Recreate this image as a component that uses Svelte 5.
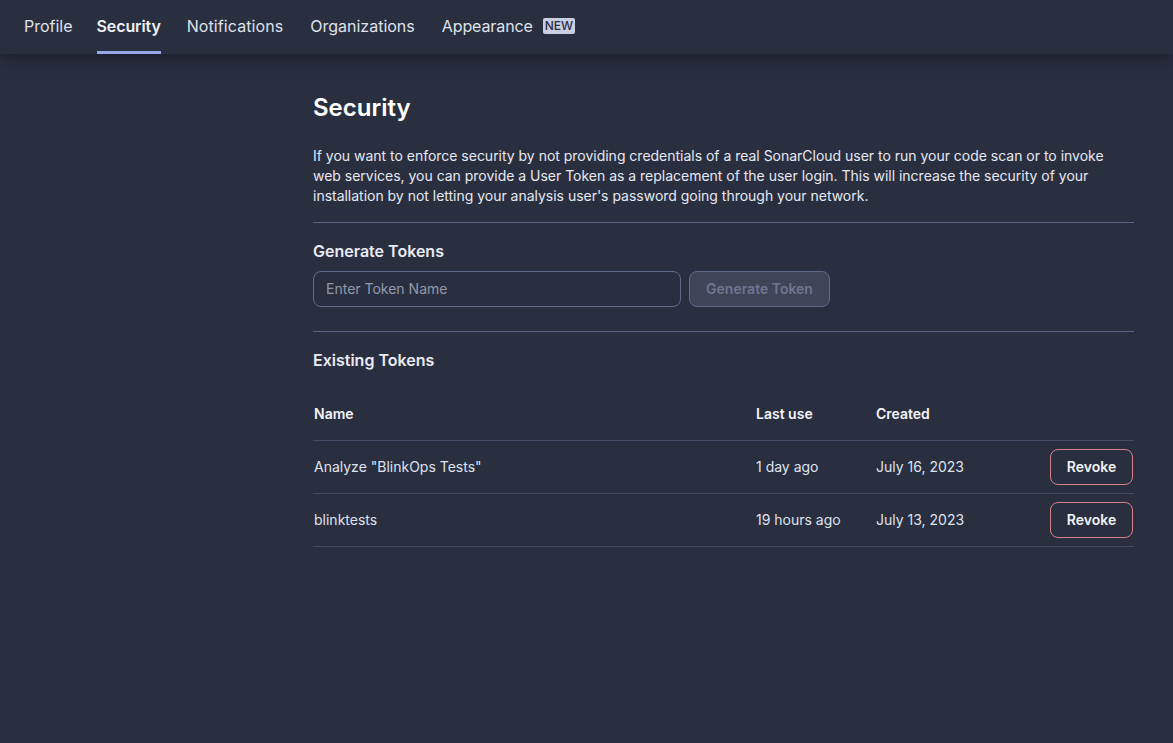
<script>
  const tabs = [
    { label: 'Profile' },
    { label: 'Security', active: true },
    { label: 'Notifications' },
    { label: 'Organizations' },
    { label: 'Appearance', badge: 'NEW' }
  ];

  const tokens = [
    { name: 'Analyze "BlinkOps Tests"', lastUse: '1 day ago', created: 'July 16, 2023' },
    { name: 'blinktests', lastUse: '19 hours ago', created: 'July 13, 2023' }
  ];
</script>

<nav class="topbar">
  {#each tabs as tab}
    <a class="tab" class:active={tab.active} href="#top">
      {tab.label}
      {#if tab.badge}<span class="badge">{tab.badge}</span>{/if}
    </a>
  {/each}
</nav>

<main class="content">
  <h1>Security</h1>
  <p class="intro">
    If you want to enforce security by not providing credentials of a real SonarCloud user to run your code scan or to invoke web services, you can provide a User Token as a replacement of the user login. This will increase the security of your installation by not letting your analysis user's password going through your network.
  </p>

  <section class="generate">
    <h2>Generate Tokens</h2>
    <form class="token-form">
      <input type="text" placeholder="Enter Token Name" />
      <button type="button" class="generate-btn" disabled>Generate Token</button>
    </form>
  </section>

  <section class="existing">
    <h2>Existing Tokens</h2>
    <table>
      <thead>
        <tr>
          <th class="col-name">Name</th>
          <th class="col-use">Last use</th>
          <th class="col-created">Created</th>
          <th></th>
        </tr>
      </thead>
      <tbody>
        {#each tokens as token}
          <tr>
            <td>{token.name}</td>
            <td>{token.lastUse}</td>
            <td>{token.created}</td>
            <td class="actions"><button type="button" class="revoke">Revoke</button></td>
          </tr>
        {/each}
      </tbody>
    </table>
  </section>
</main>

<style>
  :global(body) {
    background: #2a2f40;
    color: #e9ebf4;
    font-family: Inter, "Noto Sans", sans-serif;
    min-height: 743px;
    overflow: hidden;
  }

  .topbar {
    display: flex;
    height: 54px;
    box-sizing: border-box;
    padding-left: 24px;
    gap: 26px;
    background: #2a2f40;
    box-shadow: 0 4px 14px rgba(18, 20, 30, 0.65);
  }

  .tab {
    display: flex;
    align-items: center;
    gap: 9px;
    height: 54px;
    box-sizing: border-box;
    padding-top: 1px;
    color: #dfe2ea;
    font-size: 16px;
    line-height: 24px;
    text-decoration: none;
    border-bottom: 3px solid transparent;
  }

  .tab.active {
    margin-left: -2px;
    color: #eef0f7;
    font-weight: 600;
    letter-spacing: -0.12px;
    border-bottom-color: #98a5e6;
  }

  .tab:nth-child(3) {
    letter-spacing: 0.08px;
  }

  .tab:nth-child(4) {
    margin-left: 1px;
  }

  .tab:nth-child(5) {
    margin-left: 1px;
    gap: 10px;
    letter-spacing: -0.1px;
  }

  .badge {
    padding: 0 2px;
    border-radius: 2px;
    background: #c9cee3;
    color: #2a2f40;
    font-size: 12px;
    font-weight: 500;
    letter-spacing: 0;
    line-height: 16px;
  }

  .content {
    margin-left: 313px;
    margin-right: 39px;
    padding-top: 38px;
  }

  h1 {
    margin: 0;
    color: #fff;
    font-size: 24px;
    font-weight: 600;
    line-height: 32px;
  }

  .intro {
    margin: 22px 0 0;
    padding-bottom: 16px;
    border-bottom: 1px solid #5a6484;
    color: #e6e8f2;
    font-size: 14px;
    letter-spacing: -0.015px;
    line-height: 20px;
  }

  h2 {
    margin: 0;
    color: #e9ebf4;
    font-size: 16px;
    font-weight: 600;
    line-height: 24px;
  }

  .generate {
    padding: 16px 0 24px;
    border-bottom: 1px solid #5a6484;
  }

  .token-form {
    display: flex;
    gap: 8px;
    margin-top: 8px;
  }

  input {
    width: 368px;
    height: 36px;
    box-sizing: border-box;
    padding: 0 12px 1px;
    background: transparent;
    border: 1px solid #5f6a8c;
    border-radius: 8px;
    color: #e6e8f2;
    font: inherit;
    font-size: 14px;
  }

  input::placeholder {
    color: #9297ab;
    opacity: 1;
  }

  .generate-btn {
    width: 141px;
    height: 36px;
    padding: 0 0 1px;
    background: #3f4459;
    border: 1px solid #5f6a8c;
    border-radius: 8px;
    color: #6f7690;
    font: inherit;
    font-size: 14px;
    font-weight: 600;
  }

  .existing {
    padding-top: 16px;
  }

  table {
    width: 100%;
    margin-top: 14px;
    border-collapse: collapse;
    table-layout: fixed;
    font-size: 14px;
  }

  th {
    height: 54px;
    padding: 0 1px;
    color: #f3f4fa;
    font-weight: 600;
    text-align: left;
    border-bottom: 1px solid #434a61;
  }

  .col-name {
    width: 440px;
  }

  .col-use {
    width: 118px;
  }

  .col-created {
    width: 150px;
  }

  td {
    height: 53px;
    padding: 0 1px 1px;
    box-sizing: border-box;
    color: #dfe2ee;
    border-bottom: 1px solid #434a61;
  }

  .actions {
    padding-bottom: 0;
    text-align: right;
  }

  .revoke {
    display: block;
    width: 83px;
    height: 36px;
    margin-left: auto;
    padding: 0 0 1px;
    background: transparent;
    border: 1px solid #d98185;
    border-radius: 8px;
    color: #f3f4fa;
    font: inherit;
    font-weight: 600;
  }
</style>
